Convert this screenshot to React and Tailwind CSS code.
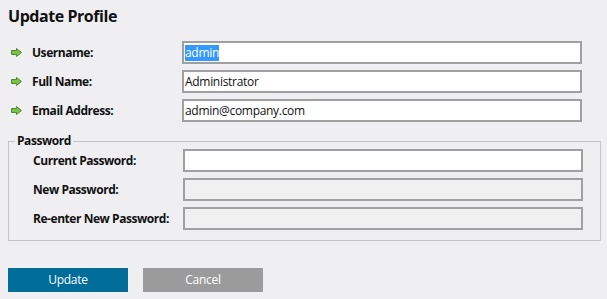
import React from "react";

const Arrow = () => (
  <svg width="11" height="9" viewBox="0 0 11 9" className="shrink-0">
    <path d="M0.5 2.5 H5.5 V0.5 L10.5 4.5 L5.5 8.5 V6.5 H0.5 Z" fill="#7cc04a" stroke="#4a8a2a" strokeWidth="1" />
  </svg>
);

const Field = ({ label, value, icon, disabled, selected }) => (
  <div className="flex items-center h-[23px]">
    <div className="w-[24px] flex items-center pl-[3px]">{icon && <Arrow />}</div>
    <div className="w-[150px] text-[12px] font-bold text-[#111] tracking-[-0.45px] whitespace-nowrap">{label}</div>
    <div
      className={`w-[400px] h-[23px] border-2 border-[#a0a0a0] flex items-center pl-[1px] text-[12px] text-[#111] tracking-[-0.3px] ${
        disabled ? "bg-[#f0f0f0]" : "bg-white"
      }`}
    >
      {selected ? (
        <span className="bg-[#3399ff] text-white leading-[16px]">{value}</span>
      ) : (
        value
      )}
    </div>
  </div>
);

export default function App() {
  return (
    <div
      className="w-[607px] h-[299px] bg-[#efeff2] px-[8px] pt-[4px]"
      style={{ fontFamily: '"Open Sans", "Noto Sans", sans-serif' }}
    >
      <h1 className="text-[16px] font-bold text-[#111] leading-[24px] tracking-[-0.45px]">Update Profile</h1>
      <div className="mt-[13px] flex flex-col gap-[6px]">
        <Field icon label="Username:" value="admin" selected />
        <Field icon label="Full Name:" value="Administrator" />
        <Field icon label="Email Address:" value="admin@company.com" />
      </div>
      <fieldset className="mt-[12px] border border-[#c4c4c4] pl-[0px] pb-[10px] w-[593px]">
        <legend className="ml-[6px] px-[2px] text-[12px] font-bold text-[#111] leading-[14px] tracking-[-0.45px]">Password</legend>
        <div className="mt-[1px] flex flex-col gap-[6px]">
          <Field label="Current Password:" value="" />
          <Field label="New Password:" value="" disabled />
          <Field label="Re-enter New Password:" value="" disabled />
        </div>
      </fieldset>
      <div className="mt-[27px] flex gap-[15px]">
        <button className="w-[120px] h-[24px] bg-[#006c9a] text-white text-[12px] tracking-[-0.3px]">Update</button>
        <button className="w-[120px] h-[24px] bg-[#9b9b9b] text-white text-[12px] tracking-[-0.3px]">Cancel</button>
      </div>
    </div>
  );
}
